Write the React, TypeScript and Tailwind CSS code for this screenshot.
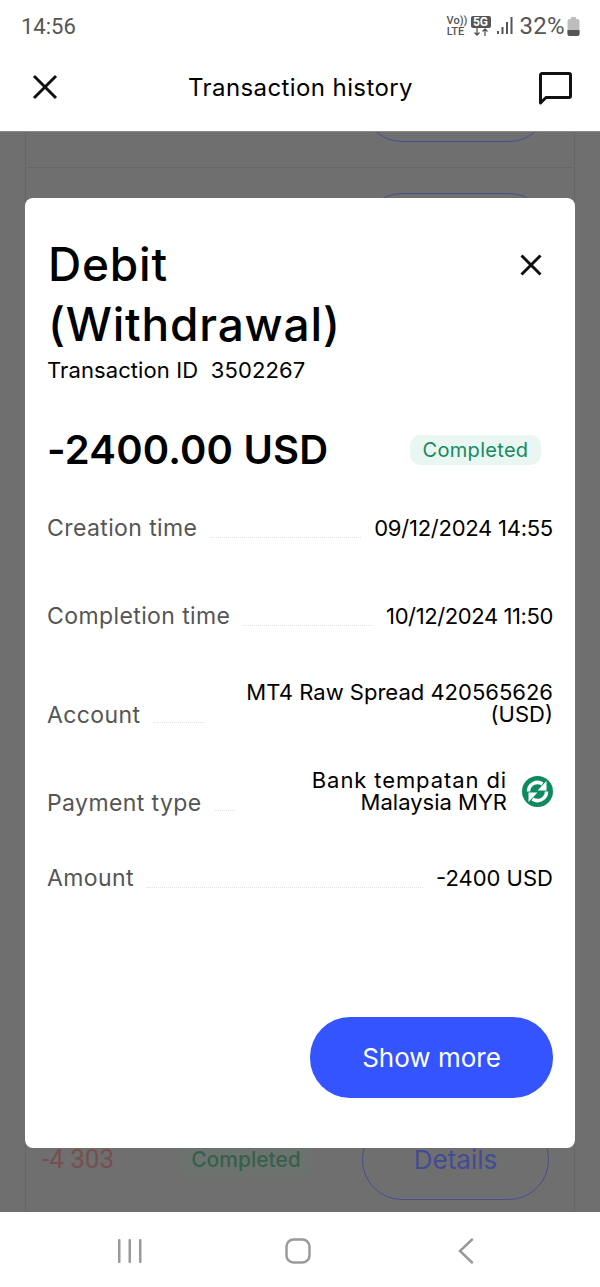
const poppins = "font-['Inter','Noto_Sans',sans-serif]";

function Row({ label, value, className, labelClass }: { label: string; value: React.ReactNode; className: string; labelClass?: string }) {
  return (
    <div className={`flex items-end ${className}`}>
      <span className={`text-[23px] leading-[24px] text-[#555555] tracking-[0.4px] ${labelClass ?? ""}`}>{label}</span>
      <span className="flex-1 mx-[13px] mb-[2px] border-b border-dotted border-[#e2e2e2]" />
      {value}
    </div>
  );
}

function BgRow({ showText }: { showText: boolean }) {
  return (
    <div className="h-[132.25px] border-b border-[#666666] flex items-center pl-[16px] pr-[25px]">
      {showText && (
        <>
          <span className="w-[139px] font-['Roboto',sans-serif] text-[26px] text-[#75504e]">-4 303</span>
          <span className="w-[130px] h-[36px] rounded-[10px] bg-[#6c736f] flex items-center justify-center text-[21px] font-medium text-[#35604c]">Completed</span>
        </>
      )}
      <span className="ml-auto w-[187px] h-[81px] rounded-[40px] border border-[#46508f] flex items-center justify-center text-[26px] text-[#414c94]">{showText ? "Details" : ""}</span>
    </div>
  );
}

export default function App() {
  return (
    <div className={`relative w-[600px] h-[1287px] bg-white flex flex-col overflow-hidden ${poppins}`}>
      <div className="h-[52px] flex items-center justify-between pl-[21px] pr-[20px] font-['Roboto',sans-serif] text-[#555555]">
        <span className="text-[22px]">14:56</span>
        <div className="flex items-center">
          <span className="text-[11px] leading-[11px] font-medium text-center mr-[6px] w-[18px]">Vo))<br />LTE</span>
          <div className="flex flex-col items-center mr-[6px] w-[20px]">
            <span className="bg-[#555555] text-white rounded-[2px] text-[12px] leading-[12px] font-bold w-[20px] text-center">5G</span>
            <svg width="16" height="8" viewBox="0 0 16 8" fill="none" stroke="#555555" strokeWidth="1.3"><path d="M4 0v7M1.5 4.5 4 7l2.500-2.500M12 8V1M9.500 3.500 12 1l2.500 2.500" /></svg>
          </div>
          <svg width="16" height="18" viewBox="0 0 16 18" className="mr-[7px]" fill="#555555"><rect x="0" y="14" width="2" height="3" /><rect x="4.500" y="10" width="2" height="7" /><rect x="9" y="5" width="2" height="12" /><rect x="13.500" y="0" width="2" height="17" /></svg>
          <span className="text-[24px] leading-[28px] tracking-[0.3px]">32%</span>
          <svg width="13" height="19" viewBox="0 0 13 19" className="ml-[2px]"><rect x="4" y="0" width="5" height="3" fill="#bdbdbd" /><rect x="0.500" y="2" width="12" height="17" rx="2" fill="#bdbdbd" /><path d="M.5 13h12v4a2 2 0 0 1-2 2h-8a2 2 0 0 1-2-2z" fill="#555555" /></svg>
        </div>
      </div>

      <div className="h-[79px] flex items-center justify-between pl-[32px] pr-[28px] pb-[8px]">
        <svg width="26" height="26" viewBox="0 0 26 26" stroke="#111111" strokeWidth="3" fill="none" className="-mt-[2px]"><path d="M2 2l22 22M24 2 2 24" /></svg>
        <span className="ml-[4px] text-[24px] leading-[32px] text-black tracking-[0.4px]">Transaction history</span>
        <svg width="33" height="34" viewBox="0 0 33 34" fill="none" className="mt-[2px]"><path d="M1.500 31V3a1.500 1.500 0 0 1 1.500-1.500h27A1.500 1.500 0 0 1 31.500 3v21a1.500 1.500 0 0 1-1.500 1.500H7z" stroke="#111111" strokeWidth="3" strokeLinejoin="round" /></svg>
      </div>

      <div className="flex-1 bg-[#6f6f6f] overflow-hidden border-t border-[#8a8a8a]">
        <div className="mx-[25px] border-x border-[#666666] -mt-[96px]">
          {Array.from({ length: 9 }).map((_, i) => (
            <BgRow key={i} showText={i === 8} />
          ))}
        </div>
      </div>

      <div className="h-[75px] flex items-center pt-[3px]">
        <div className="w-[260px] flex justify-center">
          <svg width="26" height="24" viewBox="0 0 26 24" fill="#9a9a9a"><rect x="1" y="0" width="2.500" height="24" rx="1" /><rect x="11.500" y="0" width="2.500" height="24" rx="1" /><rect x="22" y="0" width="2.500" height="24" rx="1" /></svg>
        </div>
        <div className="w-[76px] flex justify-center">
          <svg width="26" height="26" viewBox="0 0 26 26" fill="none" stroke="#9a9a9a" strokeWidth="2.500"><rect x="1.500" y="1.500" width="23" height="23" rx="7" /></svg>
        </div>
        <div className="ml-[122px] flex justify-center">
          <svg width="16" height="26" viewBox="0 0 16 26" fill="none" stroke="#9a9a9a" strokeWidth="2.500" strokeLinecap="round"><path d="M14 1.500 2 13l12 11.500" /></svg>
        </div>
      </div>

      <div className="absolute left-[25px] top-[198px] w-[550px] h-[950px] bg-white rounded-[8px] pl-[22px] pr-[22px] pt-[36px]">
        <div className="flex justify-between items-start">
          <h1 className="w-[340px] pl-px text-[46px] leading-[60px] font-medium text-black tracking-[0.8px]">Debit (Withdrawal)</h1>
          <svg width="22" height="22" viewBox="0 0 22 22" stroke="#111111" strokeWidth="3" fill="none" className="mt-[20px] mr-[11px]"><path d="M1.500 1.500l19 19M20.500 1.500l-19 19" /></svg>
        </div>
        <p className="text-[22px] leading-[30px] text-black mt-[1px] tracking-[0.1px]">Transaction ID&nbsp; 3502267</p>
        <div className="flex items-center justify-between mt-[40px] pr-[12px]">
          <span className="text-[40px] leading-[50px] font-semibold text-black tracking-[0.2px]">-2400.00 USD</span>
          <span className="h-[30px] w-[131px] rounded-[10px] bg-[#e9f6f1] text-[#168a60] text-[20px] leading-[28px] tracking-[0.3px] flex items-center justify-center">Completed</span>
        </div>
        <Row className="mt-[41px]" label="Creation time" value={<span className="text-[22px] leading-[24px] text-black tracking-[-0.25px]">09/12/2024 14:55</span>} />
        <Row className="mt-[64px]" label="Completion time" value={<span className="text-[22px] leading-[24px] text-black tracking-[-0.4px]">10/12/2024 11:50</span>} />
        <Row className="mt-[53px]" labelClass="-mb-[2px]" label="Account" value={<span className="w-[335px] text-right text-[22px] leading-[22px] text-black">MT4 Raw Spread 420565626 (USD)</span>} />
        <Row className="mt-[44px]" labelClass="-mb-[2px]" label="Payment type" value={
          <div className="w-[305px] flex items-center justify-end">
            <span className="text-right text-[22px] leading-[22px] text-black"><span className="tracking-[0.9px]">Bank tempatan di</span><br />Malaysia MYR</span>
            <svg width="31" height="31" viewBox="0 0 31 31" className="ml-[15px]">
              <circle cx="15.500" cy="15.500" r="15.500" fill="#0f8a5f" />
              <path d="M6.500 15.500A9 9 0 0 1 20.500 8" fill="none" stroke="white" strokeWidth="3.500" />
              <path d="M24.500 5v9.500H15.500z" fill="white" />
              <path d="M24.500 15.500A9 9 0 0 1 10.500 23" fill="none" stroke="white" strokeWidth="3.500" />
              <path d="M6.500 26V16.500H15.500z" fill="white" />
            </svg>
          </div>} />
        <Row className="mt-[53px]" label="Amount" value={<span className="text-[22px] leading-[24px] text-black">-2400 USD</span>} />
        <div className="flex justify-end mt-[127px]">
          <button className="w-[243px] h-[81px] rounded-[40px] bg-[#3354ff] text-white text-[26px]">Show more</button>
        </div>
      </div>
    </div>
  );
}
